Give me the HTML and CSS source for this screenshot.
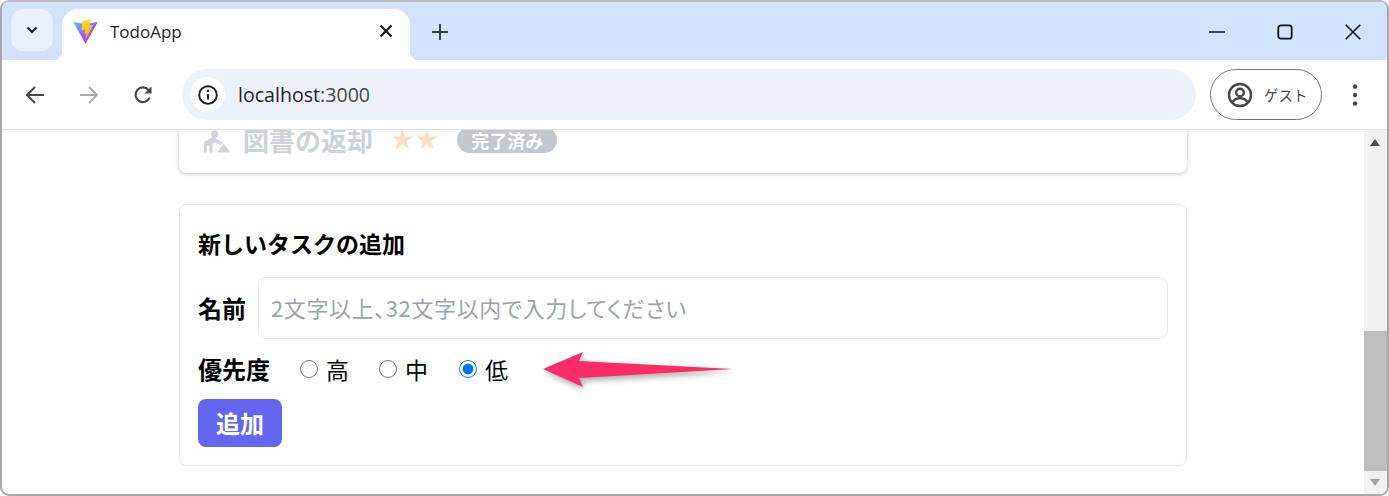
FILE: index.html
```html
<!DOCTYPE html>
<html lang="ja">
<head>
    <title>TodoApp</title>
    <meta name='viewport' content='width=device-width, initial-scale=1'>
    <link rel="stylesheet" href="styles.css">
</head>
<body>
<div class="window">
    <div class="tabstrip">
        <div class="tab-search">
            <svg width="14" height="14" viewBox="0 0 14 14"><path d="M2.500 4.500 7 9l4.500-4.500" fill="none" stroke="#1f1f1f" stroke-width="2.200"/></svg>
        </div>
        <div class="tab">
            <svg class="favicon" viewBox="0 0 410 404">
                <defs>
                    <linearGradient id="vite-a" gradientUnits="userSpaceOnUse" x1="6" y1="33" x2="235" y2="344">
                        <stop offset="0" stop-color="#41D1FF"/>
                        <stop offset="1" stop-color="#BD34FE"/>
                    </linearGradient>
                    <linearGradient id="vite-b" gradientUnits="userSpaceOnUse" x1="194.65" y1="8.8" x2="236.08" y2="292.99">
                        <stop offset="0" stop-color="#FFEA83"/>
                        <stop offset="0.08" stop-color="#FFDD35"/>
                        <stop offset="1" stop-color="#FFA800"/>
                    </linearGradient>
                </defs>
                <path d="M399.641 59.5246L215.643 388.545C211.844 395.338 202.084 395.378 198.228 388.618L10.5817 59.5563C6.38087 52.1896 12.6802 43.2665 21.0281 44.7586L205.223 77.6824C206.398 77.8924 207.601 77.8904 208.776 77.6763L389.119 44.8058C397.439 43.2894 403.768 52.1434 399.641 59.5246Z" fill="url(#vite-a)"/>
                <path d="M292.965 1.5744L156.801 28.2552C154.563 28.6937 152.906 30.5903 152.771 32.8664L144.395 174.33C144.198 177.662 147.258 180.248 150.51 179.498L188.42 170.749C191.967 169.931 195.172 173.055 194.443 176.622L183.18 231.775C182.422 235.487 185.907 238.661 189.532 237.56L212.947 230.446C216.577 229.344 220.065 232.527 219.297 236.242L201.398 322.875C200.278 328.294 207.486 331.249 210.492 326.603L212.5 323.5L323.454 102.072C325.312 98.3645 322.108 94.137 318.036 94.9228L279.014 102.454C275.347 103.161 272.227 99.746 273.262 96.1583L298.731 7.86689C299.767 4.27314 296.636 0.855181 292.965 1.5744Z" fill="url(#vite-b)"/>
            </svg>
            <span class="tab-title">TodoApp</span>
            <svg class="tab-close" width="14" height="14" viewBox="0 0 14 14"><path d="M1.500 1.500l11 11M12.500 1.500l-11 11" stroke="#1f1f1f" stroke-width="2.200"/></svg>
        </div>
        <svg class="new-tab" width="16" height="16" viewBox="0 0 16 16"><path d="M8 0v16M0 8h16" stroke="#3c3c3c" stroke-width="2"/></svg>
        <div class="window-controls">
            <svg width="16" height="16" viewBox="0 0 16 16"><path d="M0 8h16" stroke="#111" stroke-width="1.600"/></svg>
            <svg width="16" height="16" viewBox="0 0 16 16"><rect x="1.300" y="1.300" width="13.400" height="13.400" rx="2.500" fill="none" stroke="#111" stroke-width="1.800"/></svg>
            <svg width="16" height="16" viewBox="0 0 16 16"><path d="M.7.7l14.600 14.600M15.300.7.7 15.300" stroke="#111" stroke-width="1.600"/></svg>
        </div>
    </div>
    <div class="toolbar">
        <svg class="nav-icon" width="20" height="20" viewBox="0 0 20 20"><path d="M19 10H2M10 2l-8 8 8 8" fill="none" stroke="#474747" stroke-width="2"/></svg>
        <svg class="nav-icon" width="20" height="20" viewBox="0 0 20 20"><path d="M1 10h17M10 2l8 8-8 8" fill="none" stroke="#ababab" stroke-width="2"/></svg>
        <svg class="nav-icon" width="20" height="20" viewBox="0 0 20 20"><path d="M16.600 12.600A7.300 7.300 0 1 1 15.400 5l1.900 2.200" fill="none" stroke="#474747" stroke-width="2.200"/><path d="M18.500 1.500v7h-7z" fill="#474747"/></svg>
        <div class="omnibox">
            <div class="site-info">
                <svg width="20" height="20" viewBox="0 0 20 20"><circle cx="10" cy="10" r="8.800" fill="none" stroke="#1f1f1f" stroke-width="1.900"/><path d="M10 9v5.500" stroke="#1f1f1f" stroke-width="2"/><circle cx="10" cy="6" r="1.200" fill="#1f1f1f"/></svg>
            </div>
            <span class="url">localhost<span class="url-port">:3000</span></span>
        </div>
        <div class="profile">
            <svg width="26" height="26" viewBox="0 0 26 26"><circle cx="13" cy="13" r="11" fill="none" stroke="#474747" stroke-width="2.400"/><circle cx="13" cy="10.500" r="3.800" fill="none" stroke="#474747" stroke-width="2.400"/><path d="M5.500 20c2-3 4.800-3.800 7.500-3.800s5.500.8 7.500 3.800" fill="none" stroke="#474747" stroke-width="2.400"/></svg>
            <span class="profile-name">ゲスト</span>
        </div>
        <svg class="menu" width="6" height="24" viewBox="0 0 6 24"><circle cx="3" cy="3.500" r="2.200" fill="#474747"/><circle cx="3" cy="12" r="2.200" fill="#474747"/><circle cx="3" cy="20.500" r="2.200" fill="#474747"/></svg>
    </div>
    <div class="page">
        <div class="viewport">
            <div class="card task-card">
                <div class="task done">
                    <svg class="task-icon" width="29" height="26" viewBox="0 0 29 26">
                        <circle cx="11.700" cy="7" r="3.700"/>
                        <path d="M1 15 11 9.500 14 12 19.500 15.500 18 18 12 15.500 9.500 17V25.500H6.500V19L4 18.500 3.500 25.500H.5z"/>
                        <path d="M14 25.500 20.500 17 27.500 25.500z"/>
                    </svg>
                    <span class="task-name">図書の返却</span>
                    <span class="stars">★★</span>
                    <span class="badge">完了済み</span>
                </div>
            </div>
            <form class="card add-form">
                <h2>新しいタスクの追加</h2>
                <div class="form-row">
                    <label class="field-label" for="name">名前</label>
                    <input id="name" class="name-input" type="text" placeholder="2文字以上、32文字以内で入力してください">
                </div>
                <div class="form-row priority-row">
                    <span class="field-label">優先度</span>
                    <label class="radio"><input type="radio" name="priority">高</label>
                    <label class="radio"><input type="radio" name="priority">中</label>
                    <label class="radio"><input type="radio" name="priority" checked>低</label>
                </div>
                <button class="add-button" type="button">追加</button>
            </form>
        </div>
        <div class="scrollbar">
            <div class="scroll-up"></div>
            <div class="scroll-track"><div class="scroll-thumb"></div></div>
            <div class="scroll-down"></div>
        </div>
    </div>
    <svg class="arrow" width="200" height="50" viewBox="0 0 200 50">
        <path d="M3 19 43 2 39 11 193 19 39 28 43 37z" fill="#fb2c69"/>
    </svg>
</div>
</body>
</html>
```

FILE: styles.css
```css
html {
    box-sizing: border-box;
}

*, *:before, *:after {
    box-sizing: inherit;
}

body {
    margin: 0;
    background-color: #fff;
    font-family: "Noto Sans CJK JP", "Noto Sans", sans-serif;
    overflow: hidden;
}

.window {
    position: relative;
    display: flex;
    flex-direction: column;
    height: 496px;
    border: 2px solid #a8a8a8;
    border-top-color: #bcbcbc;
    border-radius: 9px;
    overflow: hidden;
    background-color: #fff;
}

/* tab strip */
.tabstrip {
    display: flex;
    align-items: flex-start;
    flex: 0 0 58px;
    padding: 7px 0 0 9px;
    background-color: #d3e3fd;
}

.tab-search {
    display: flex;
    align-items: center;
    justify-content: center;
    width: 42px;
    height: 42px;
    border-radius: 12px;
    background-color: #e9f0fe;
}

.tab {
    position: relative;
    display: flex;
    align-items: center;
    width: 348px;
    height: 51px;
    margin-left: 9px;
    padding: 0 17px 7px 12px;
    border-radius: 16px 16px 0 0;
    background-color: #fff;
}

.tab:before, .tab:after {
    content: "";
    position: absolute;
    bottom: 0;
    width: 9px;
    height: 9px;
}

.tab:before {
    left: -9px;
    background: radial-gradient(circle at 0 0, #d3e3fd 9px, #fff 9.5px);
}

.tab:after {
    right: -9px;
    background: radial-gradient(circle at 100% 0, #d3e3fd 9px, #fff 9.5px);
}

.favicon {
    width: 25px;
    height: 25px;
    margin-left: -1px;
}

.tab-title {
    flex: 1;
    margin-left: 12px;
    font-family: "Open Sans", sans-serif;
    font-size: 17px;
    color: #1f1f1f;
}

.new-tab {
    margin: 15px 0 0 22px;
}

.window-controls {
    display: flex;
    gap: 52px;
    margin: 15px 26px 0 auto;
}

/* toolbar */
.toolbar {
    position: relative;
    display: flex;
    align-items: center;
    flex: 0 0 70px;
    padding: 0 0 0 23px;
    border-bottom: 1px solid #dfdfdf;
    border-radius: 10px 10px 0 0;
    background-color: #fff;
}

.nav-icon {
    margin-right: 34px;
}

.nav-icon:nth-child(3) {
    margin-right: 29px;
}

.omnibox {
    display: flex;
    align-items: center;
    width: 1014px;
    height: 51px;
    padding-left: 8px;
    border-radius: 26px;
    background-color: #ecf1fa;
}

.site-info {
    display: flex;
    align-items: center;
    justify-content: center;
    width: 35px;
    height: 35px;
    border-radius: 50%;
    background-color: #fff;
}

.url {
    margin-left: 13px;
    font-family: "Open Sans", sans-serif;
    font-size: 19.6px;
    color: #1f1f1f;
}

.url-port {
    color: #474747;
}

.profile {
    display: flex;
    align-items: center;
    width: 112px;
    height: 51px;
    margin-left: 14px;
    padding-left: 16px;
    border: 1px solid #747775;
    border-radius: 26px;
}

.profile-name {
    margin-left: 11px;
    font-size: 14.5px;
    color: #474747;
}

.menu {
    margin-left: 30px;
}

/* page */
.page {
    display: flex;
    flex: 1;
    min-height: 0;
}

.viewport {
    flex: 1;
    padding: 0 177px;
    overflow: hidden;
}

.card {
    border-radius: 8px;
    background-color: #fff;
}

.task-card {
    height: 70px;
    margin-top: -27px;
    padding: 24px 0 0 24px;
    box-shadow: 0 1px 4px rgba(0, 0, 0, 0.25);
}

.task {
    display: flex;
    align-items: center;
    height: 25px;
}

.task-icon {
    fill: #d1d5db;
}

.task-name {
    margin-left: 11px;
    font-size: 26px;
    font-weight: 700;
    color: #ced2d9;
}

.stars {
    margin-left: 17px;
    font-family: "DejaVu Sans", sans-serif;
    font-size: 28px;
    letter-spacing: -0.5px;
    color: #fedfc6;
}

.badge {
    margin-left: 18px;
    padding: 0 14px;
    border-radius: 14px;
    background-color: #c3c8cf;
    font-size: 18px;
    font-weight: 700;
    line-height: 26px;
    color: #fff;
}

.add-form {
    height: 262px;
    margin-top: 31px;
    padding: 16px 18px;
    border: 1px solid #e5e7eb;
}

.add-form h2 {
    margin: 0 0 12px;
    font-size: 23px;
    font-weight: 700;
    line-height: 44px;
    color: #000;
}

.form-row {
    display: flex;
    align-items: center;
}

.field-label {
    padding-bottom: 2px;
    font-size: 24px;
    font-weight: 700;
    color: #000;
}

.name-input {
    flex: 1;
    height: 62px;
    margin-left: 12px;
    padding: 0 12px 2px;
    border: 1px solid #e5e7eb;
    border-radius: 8px;
    font-family: inherit;
    font-size: 22px;
    font-feature-settings: "palt";
    letter-spacing: 0.6px;
}

.name-input::placeholder {
    color: #9ca3af;
}

.priority-row {
    height: 34px;
    margin-top: 13px;
}

.radio {
    display: flex;
    align-items: center;
    margin-left: 30px;
    font-size: 23px;
    color: #000;
}

.radio + .radio {
    margin-left: 30px;
}

.radio + .radio + .radio {
    margin-left: 31px;
}

.radio input {
    width: 18px;
    height: 18px;
    margin: 0 8px 0 0;
}

.add-button {
    display: block;
    width: 84px;
    height: 48px;
    margin-top: 13px;
    padding: 0 0 2px;
    border: none;
    border-radius: 8px;
    background-color: #6366f1;
    font-family: inherit;
    font-size: 24px;
    font-weight: 700;
    color: #fff;
}

/* scrollbar */
.scrollbar {
    display: flex;
    flex-direction: column;
    flex: 0 0 23px;
    background-color: #f1f1f1;
}

.scroll-up, .scroll-down {
    width: 0;
    height: 0;
    margin: 9px 0 0 6px;
    border-left: 5.5px solid transparent;
    border-right: 5.5px solid transparent;
}

.scroll-up {
    flex: 0 0 7px;
    border-bottom: 7px solid #505050;
}

.scroll-down {
    flex: 0 0 7px;
    margin: 8px 0 8px 6px;
    border-top: 7px solid #a3a3a3;
}

.scroll-track {
    display: flex;
    flex: 1;
    align-items: flex-end;
}

.scroll-thumb {
    width: 100%;
    height: 140px;
    background-color: #bebebe;
}

/* annotation lying over the page */
.arrow {
    position: absolute;
    left: 538px;
    top: 348px;
    filter: drop-shadow(2px 3px 3px rgba(0, 0, 0, 0.35));
}
```
